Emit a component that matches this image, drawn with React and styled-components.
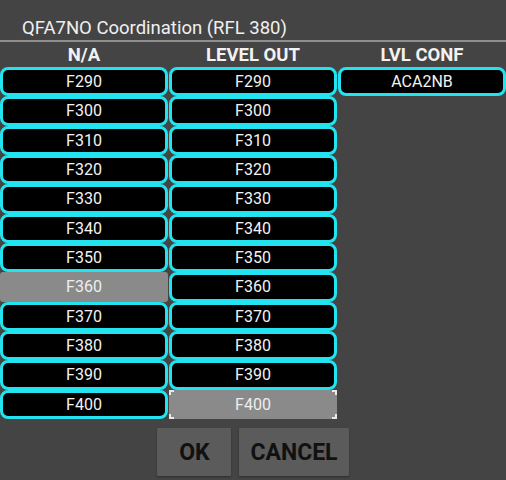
import React from "react";
import styled, { createGlobalStyle, css } from "styled-components";

const Global = createGlobalStyle`
  html, body { margin: 0; padding: 0; background: #444444; }
  body { font-family: Roboto, "Noto Sans", sans-serif; }
`;

const Page = styled.div`
  width: 506px;
  height: 480px;
  background: #444444;
  display: flex;
  flex-direction: column;
  overflow: hidden;
`;

const Title = styled.div`
  height: 40px;
  box-sizing: border-box;
  padding: 18px 0 0 22px;
  font-size: 18.5px;
  line-height: 21px;
  color: #f0f0f0;
`;

const Divider = styled.div`
  height: 2px;
  background: #8e8e8e;
`;

const Grid = styled.div`
  display: grid;
  grid-template-columns: repeat(3, 1fr);
  column-gap: 1px;
`;

const Header = styled.div`
  height: 25px;
  display: flex;
  align-items: center;
  justify-content: center;
  font-size: 18.5px;
  font-weight: 700;
  color: #f2f2f2;
`;

const List = styled(Grid)`
  height: 352px;
  overflow: hidden;
  align-items: start;
`;

const Column = styled.div`
  display: flex;
  flex-direction: column;
`;

const Cell = styled.div`
  position: relative;
  height: 29.33px;
  box-sizing: border-box;
  border: 3px solid #22e4f0;
  border-radius: 8px;
  background: #000;
  color: #f2f2f2;
  font-size: 16px;
  display: flex;
  align-items: center;
  justify-content: center;
  flex-shrink: 0;
  ${(p) =>
    p.$selected &&
    css`
      background: #8a8a8a;
      border-color: #8a8a8a;
      border-radius: 3px;
      color: #eeeeee;
    `}
  ${(p) =>
    p.$focused &&
    css`
      &::after {
        content: "";
        position: absolute;
        inset: -3px;
        background:
          linear-gradient(#e8e8e8, #e8e8e8) top left / 5px 2px no-repeat,
          linear-gradient(#e8e8e8, #e8e8e8) top left / 2px 5px no-repeat,
          linear-gradient(#e8e8e8, #e8e8e8) top right / 5px 2px no-repeat,
          linear-gradient(#e8e8e8, #e8e8e8) top right / 2px 5px no-repeat,
          linear-gradient(#e8e8e8, #e8e8e8) bottom left / 5px 2px no-repeat,
          linear-gradient(#e8e8e8, #e8e8e8) bottom left / 2px 5px no-repeat,
          linear-gradient(#e8e8e8, #e8e8e8) bottom right / 5px 2px no-repeat,
          linear-gradient(#e8e8e8, #e8e8e8) bottom right / 2px 5px no-repeat;
      }
    `}
`;

const Buttons = styled.div`
  display: flex;
  justify-content: center;
  gap: 8px;
  margin-top: 9px;
`;

const Button = styled.button`
  height: 48px;
  min-width: 74px;
  padding: 0 11px;
  border: none;
  border-radius: 1px;
  background: #5b5b5b;
  box-shadow: 0 1px 2px rgba(0, 0, 0, 0.35);
  color: #111111;
  font-family: Roboto, sans-serif;
  font-size: 23px;
  font-weight: 700;
  cursor: pointer;
`;

const levels = ["F290", "F300", "F310", "F320", "F330", "F340", "F350", "F360", "F370", "F380", "F390", "F400"];

export default function App() {
  return (
    <Page>
      <Global />
      <Title>QFA7NO Coordination (RFL 380)</Title>
      <Divider />
      <Grid>
        <Header>N/A</Header>
        <Header>LEVEL OUT</Header>
        <Header>LVL CONF</Header>
      </Grid>
      <List>
        <Column>
          {levels.map((l) => (
            <Cell key={l} $selected={l === "F360"}>{l}</Cell>
          ))}
        </Column>
        <Column>
          {levels.map((l) => (
            <Cell key={l} $selected={l === "F400"} $focused={l === "F400"}>{l}</Cell>
          ))}
        </Column>
        <Column>
          <Cell>ACA2NB</Cell>
        </Column>
      </List>
      <Buttons>
        <Button>OK</Button>
        <Button>CANCEL</Button>
      </Buttons>
    </Page>
  );
}
